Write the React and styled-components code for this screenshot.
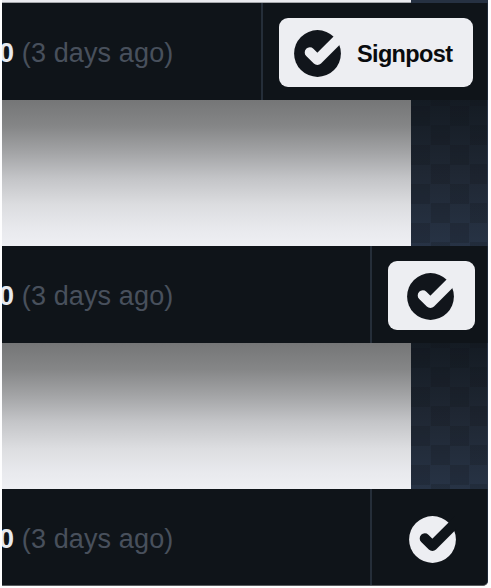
import styled, { createGlobalStyle } from "styled-components"

const INK = "#0f1419"
const PAPER = "#edeef2"

//The round logo, the check mark is cut out in the background colour
const CheckLogo = ({ color, cut }) => (
  <Logo viewBox="0 0 47 47" aria-hidden="true">
    <circle cx="23.5" cy="23.5" r="23.4" fill={color} />
    <path
      d="M15.8 22.4 L23.4 29.9 L50 3.3"
      fill="none"
      stroke={cut}
      strokeWidth="10.2"
      strokeLinecap="round"
      strokeLinejoin="round"
    />
  </Logo>
)

const Age = () => (
  <Meta>
    <Count>0</Count> (3 days ago)
  </Meta>
)

const Gap = ({ offset }) => (
  <Preview>
    <Sheet />
    <Pattern $offset={offset} />
  </Preview>
)

export default function App() {
  return (
    <>
      <GlobalStyle />
      <Page>
        <TopStrip>
          <StripSheet />
        </TopStrip>
        <Bar>
          <Age />
          <Actions $width={226}>
            <SignpostButton $width={194}>
              <CheckLogo color="#11151b" cut={PAPER} />
              <Label>Signpost</Label>
            </SignpostButton>
          </Actions>
        </Bar>
        <Gap offset={6} />
        <Bar>
          <Age />
          <Actions $width={117}>
            <SignpostButton $width={87} $compact>
              <CheckLogo color="#11151b" cut={PAPER} />
            </SignpostButton>
          </Actions>
        </Bar>
        <Gap offset={5} />
        <Bar $last>
          <Age />
          <Actions $width={117}>
            <SignpostButton $width={87} $compact $plain>
              <CheckLogo color={PAPER} cut={INK} />
            </SignpostButton>
          </Actions>
        </Bar>
      </Page>
    </>
  )
}

const GlobalStyle = createGlobalStyle`
  * {
    box-sizing: border-box;
  }

  body {
    margin: 0;
    background: #fdfdfe;
    font-family: "Liberation Sans", Arial, sans-serif;
    overflow: hidden;
  }
`

const Page = styled.main`
  width: 486px;
  margin-left: 2px;
  overflow: hidden;
`

const TopStrip = styled.div`
  height: 3px;
  background: #263142;
`

const StripSheet = styled.div`
  width: 409px;
  height: 3px;
  background: #eaebef;
  border-bottom: 1px solid #a6a8ac;
`

const Bar = styled.section`
  display: flex;
  align-items: stretch;
  justify-content: space-between;
  height: 97px;
  background: ${INK};
  border-right: 1px solid #1e2836;
  border-bottom: ${({ $last }) => ($last ? "1px solid #585b5e" : "none")};
  border-bottom-right-radius: ${({ $last }) => ($last ? "5px" : "0")};
`

const Meta = styled.p`
  margin: 0 0 0 -3px;
  padding-top: 35px;
  color: #48505c;
  font-size: 27px;
  letter-spacing: 0.13px;
  line-height: 31px;
  white-space: nowrap;
`

const Count = styled.strong`
  color: #e6e9ee;
`

const Actions = styled.div`
  display: flex;
  align-items: flex-start;
  width: ${({ $width }) => $width}px;
  padding: 15px 0 0 16px;
  border-left: 2px solid #252e39;
`

const SignpostButton = styled.button`
  display: flex;
  align-items: center;
  justify-content: ${({ $compact }) => ($compact ? "center" : "flex-start")};
  gap: 16px;
  width: ${({ $width }) => $width}px;
  height: 69px;
  padding: ${({ $compact }) => ($compact ? "2px 2px 0 0" : "2px 0 0 15px")};
  margin-left: ${({ $plain }) => ($plain ? "2px" : "0")};
  border: none;
  border-radius: 9px;
  background: ${({ $plain }) => ($plain ? "transparent" : PAPER)};
  font-family: inherit;
  cursor: pointer;
`

const Logo = styled.svg`
  flex: none;
  display: block;
  width: 47px;
  height: 47px;
`

const Label = styled.span`
  color: #090b0e;
  font-size: 23.5px;
  font-weight: 700;
  letter-spacing: -0.65px;
  line-height: 28px;
`

const Preview = styled.div`
  display: flex;
  height: 146px;
`

const Sheet = styled.div`
  width: 409px;
  background: linear-gradient(
    #757677 0%,
    #858687 18%,
    #a3a4a6 36%,
    #c4c5c8 54%,
    #dcdde0 72%,
    #e8e9ed 88%,
    #eeeff3 100%
  );
`

const Pattern = styled.div`
  flex: 1;
  border-right: 1px solid #2b374a;
  background:
    conic-gradient(
        transparent 25%,
        rgba(15, 18, 24, 0.2) 0 50%,
        transparent 0 75%,
        rgba(15, 18, 24, 0.2) 0
      )
      0 ${({ $offset }) => $offset}px / 39px 39px,
    linear-gradient(#141b23, #1f2733 50%, #273345);
`
